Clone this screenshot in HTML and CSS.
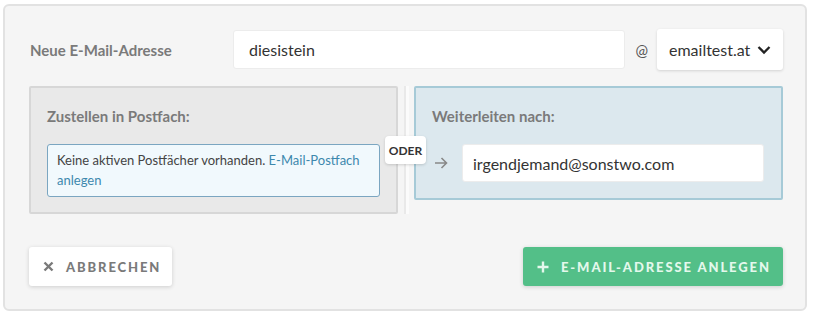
FILE: index.html
```html
<!DOCTYPE html>
<html lang="de">
<head>
  <meta charset="UTF-8">
  <meta name="viewport" content="width=device-width, initial-scale=1.0">
  <title>Neue E-Mail-Adresse</title>
  <link rel="stylesheet" href="styles.css">
</head>
<body>

  <div class="panel">
    <div class="address-row">
      <label class="address-label" for="local">Neue E-Mail-Adresse</label>
      <input class="text-input local-input" type="text" id="local" value="diesistein">
      <span class="at">@</span>
      <div class="domain-select">
        <span>emailtest.at</span>
        <svg width="14" height="10" viewBox="0 0 14 10"><path d="M1.5 2 L7 7.5 L12.5 2" fill="none" stroke="#222" stroke-width="2.3"/></svg>
      </div>
    </div>

    <div class="targets">
      <div class="target mailbox">
        <h3 class="target-title">Zustellen in Postfach:</h3>
        <div class="info">
          Keine aktiven Postfächer vorhanden. <a href="#">E-Mail-Postfach<br>anlegen</a>
        </div>
      </div>

      <div class="divider">
        <span class="stripe"></span>
        <span class="oder">ODER</span>
      </div>

      <div class="target forward">
        <h3 class="target-title">Weiterleiten nach:</h3>
        <div class="forward-row">
          <svg class="arrow" width="14" height="12" viewBox="0 0 14 12"><path d="M1 6 H12.5 M7.5 1 L12.5 6 L7.5 11" fill="none" stroke="#888" stroke-width="1.6"/></svg>
          <input class="text-input forward-input" type="text" value="irgendjemand@sonstwo.com">
        </div>
      </div>
    </div>

    <div class="actions">
      <button type="button" class="btn btn-cancel">
        <svg width="11" height="11" viewBox="0 0 11 11"><path d="M1.5 1.5 L9.5 9.5 M9.5 1.5 L1.5 9.5" stroke="#7a7a7a" stroke-width="2.4"/></svg>
        ABBRECHEN
      </button>
      <button type="button" class="btn btn-create">
        <svg width="12" height="12" viewBox="0 0 12 12"><path d="M6 0.5 V11.5 M0.5 6 H11.5" stroke="#e4f8ec" stroke-width="2.4"/></svg>
        E-MAIL-ADRESSE ANLEGEN
      </button>
    </div>
  </div>

</body>
</html>
```

FILE: styles.css
```css
body {
  margin: 0;
  background-color: #ffffff;
  font-family: Lato, "Open Sans", sans-serif;
  color: #333;
}

.panel {
  margin: 4px 6px 7px 3px;
  border: 2px solid #e2e2e2;
  border-radius: 6px;
  background-color: #f5f5f5;
  padding: 23px 22px 23px 24px;
}

/* address row */
.address-row {
  display: flex;
  align-items: center;
  height: 41px;
}

.address-label {
  width: 203px;
  padding-left: 1px;
  font-size: 15px;
  font-weight: bold;
  color: #7a7a7a;
}

.text-input {
  border: 1px solid #ececec;
  border-radius: 3px;
  background: #fff;
  font-family: inherit;
  font-size: 16px;
  color: #333;
  outline: none;
  box-sizing: border-box;
}

.local-input {
  flex: 1;
  height: 39px;
  padding: 0 15px;
}

.at {
  margin: 0 9px 0 10px;
  font-size: 15px;
  color: #555;
}

.domain-select {
  width: 126px;
  height: 41px;
  box-sizing: border-box;
  display: flex;
  align-items: center;
  justify-content: space-between;
  padding: 0 12px 0 12px;
  background: #fff;
  border-radius: 3px;
  box-shadow: 0 1px 3px rgba(0, 0, 0, 0.14);
  font-size: 16px;
  color: #333;
}

/* targets */
.targets {
  display: flex;
  align-items: flex-start;
  margin-top: 16px;
}

.target {
  width: 369px;
  box-sizing: border-box;
  border: 2px solid;
  border-radius: 2px;
  padding: 18px 16px 15px 16px;
}

.mailbox {
  background-color: #e9e9e9;
  border-color: #d7d7d7;
}

.forward {
  background-color: #dce8ee;
  border-color: #a6cad7;
  padding-right: 17px;
  padding-bottom: 16px;
}

.target-title {
  margin: 0 0 18px 0;
  font-size: 15px;
  line-height: 20px;
  font-weight: bold;
  color: #7a7a7a;
}

.info {
  border: 1px solid #7ba6c1;
  border-radius: 3px;
  background-color: #f1f9fd;
  padding: 5px 9px 6px 9px;
  font-size: 13px;
  line-height: 20px;
  color: #444;
}

.info a {
  color: #3d88ad;
  text-decoration: none;
}

.divider {
  position: relative;
  width: 16px;
  align-self: stretch;
  display: flex;
  justify-content: center;
}

.stripe {
  width: 5px;
  margin-left: 1px;
  background: linear-gradient(to right, #e9e9e9 0, #e9e9e9 2px, #fbfbfb 2px);
}

.oder {
  position: absolute;
  top: 50px;
  left: -13px;
  width: 41px;
  height: 28px;
  display: flex;
  align-items: center;
  justify-content: center;
  background: #fff;
  border-radius: 4px;
  box-shadow: 0 1px 3px rgba(0, 0, 0, 0.16);
  font-size: 12px;
  font-weight: bold;
  color: #333;
  z-index: 2;
}

.forward-row {
  display: flex;
  align-items: center;
  gap: 14px;
  padding-left: 2px;
}

.forward-input {
  flex: 1;
  height: 38px;
  padding: 0 10px;
}

/* actions */
.actions {
  display: flex;
  justify-content: space-between;
  margin-top: 33px;
}

.btn {
  height: 39px;
  display: flex;
  align-items: center;
  gap: 12px;
  border: none;
  border-radius: 3px;
  cursor: pointer;
  font-family: inherit;
  font-size: 13px;
  font-weight: 900;
  letter-spacing: 1.9px;
  box-shadow: 0 1px 4px rgba(0, 0, 0, 0.16);
}

.btn-cancel {
  width: 143px;
  padding: 0 10px 0 14px;
  background-color: #fff;
  color: #7a7a7a;
}

.btn-create {
  width: 260px;
  padding: 0 10px 0 14px;
  background-color: #53bf88;
  color: #e4f8ec;
}
```
